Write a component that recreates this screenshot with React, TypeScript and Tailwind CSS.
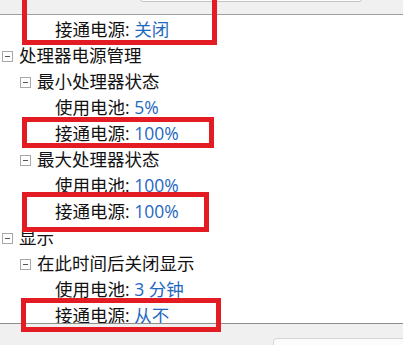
import React from 'react';

type Row = { level: number; label: string; value?: string; toggle?: boolean };

const rows: Row[] = [
    { level: 2, label: '接通电源', value: '关闭' },
    { level: 0, label: '处理器电源管理', toggle: true },
    { level: 1, label: '最小处理器状态', toggle: true },
    { level: 2, label: '使用电池', value: '5%' },
    { level: 2, label: '接通电源', value: '100%' },
    { level: 1, label: '最大处理器状态', toggle: true },
    { level: 2, label: '使用电池', value: '100%' },
    { level: 2, label: '接通电源', value: '100%' },
    { level: 0, label: '显示', toggle: true },
    { level: 1, label: '在此时间后关闭显示', toggle: true },
    { level: 2, label: '使用电池', value: '3 分钟' },
    { level: 2, label: '接通电源', value: '从不' },
];

const indent = ['pl-[2px]', 'pl-[20px]', 'pl-[38px]'];

const Toggle: React.FC<{ visible?: boolean }> = ({ visible }) => (
    <span
        className={`w-[11px] h-[11px] shrink-0 flex items-center justify-center ${
            visible ? 'border border-[#a8a8a8] bg-white' : ''
        }`}
    >
        {visible && <span className="block w-[5px] h-px bg-[#555]" />}
    </span>
);

const TreeRow: React.FC<{ row: Row }> = ({ row }) => (
    <div className={`h-[26px] flex items-center gap-[6px] ${indent[row.level]}`}>
        <Toggle visible={row.toggle} />
        <span className="whitespace-nowrap text-[#111]">
            {row.label}
            {row.value !== undefined && (
                <>
                    : <span className="text-[#1f68c0]">{row.value}</span>
                </>
            )}
        </span>
    </div>
);

export default function App() {
    return (
        <div
            className="relative w-[403px] h-[345px] overflow-hidden bg-white flex flex-col text-[17.5px] leading-none"
            style={{ fontFamily: "'Open Sans', 'Noto Sans CJK SC', sans-serif" }}
        >
            <div className="relative h-[15px] shrink-0 bg-[#f0f0f0] border-b border-[#a0a0a0]">
                <div className="absolute left-[140px] top-[-6px] w-[222px] h-[8px] bg-[#fdfdfd] border border-[#c4c4c4] rounded-b-[3px]" />
            </div>
            <div className="flex-1 overflow-hidden pt-[2px]">
                {rows.map((row, i) => (
                    <TreeRow key={i} row={row} />
                ))}
            </div>
            <div className="relative h-[22px] shrink-0 bg-[#f0f0f0] border-t border-[#8e8e8e]">
                <div className="absolute left-[273px] top-[14px] w-[140px] h-[20px] bg-[#fbfbfb] border border-[#d6d6d6] rounded-tl-[4px]" />
            </div>

            {/* red annotation frames */}
            <div className="absolute left-[22px] top-[-6px] w-[195px] h-[51px] border-[5px] border-[#e31b23]" />
            <div className="absolute left-[22px] top-[117px] w-[192px] h-[31px] border-[5px] border-[#e31b23]" />
            <div className="absolute left-[22px] top-[192px] w-[187px] h-[40px] border-[5px] border-[#e31b23]" />
            <div className="absolute left-[21px] top-[298px] w-[200px] h-[34px] border-[5px] border-[#e31b23]" />
        </div>
    );
}
